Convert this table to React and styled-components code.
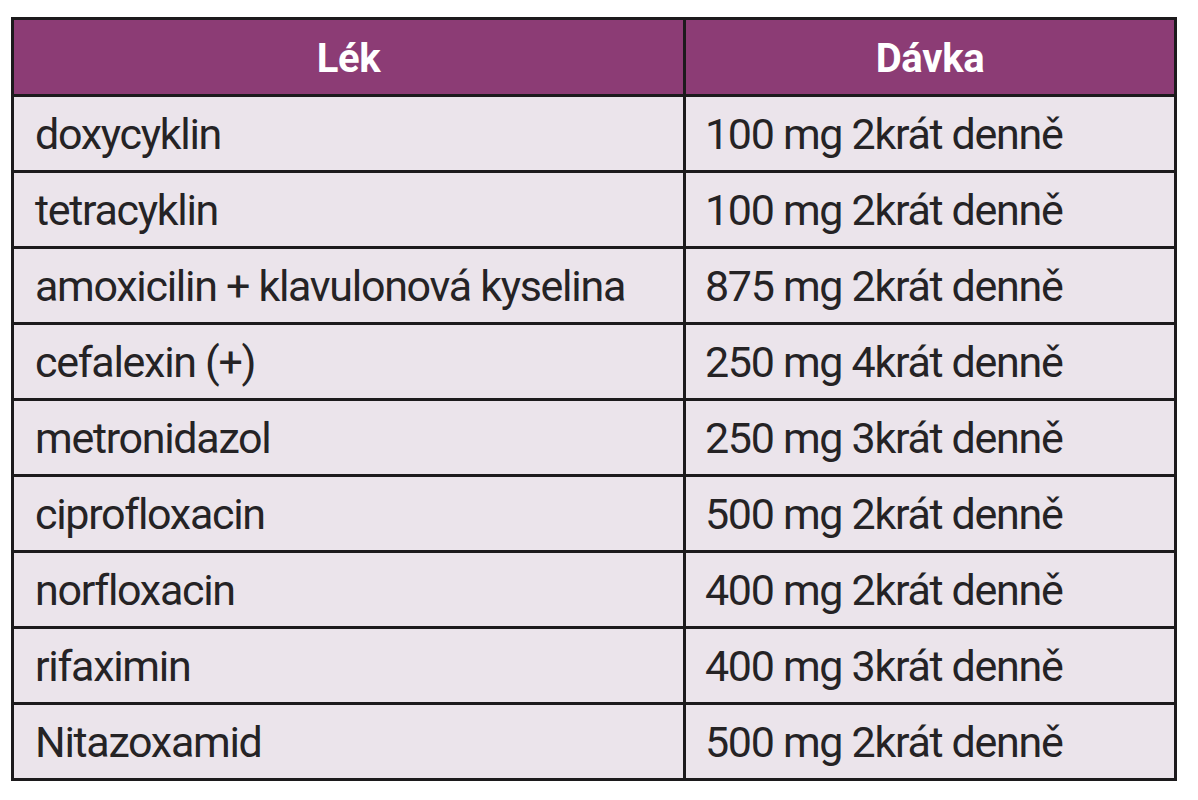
import React from "react";
import styled, { createGlobalStyle } from "styled-components";

const GlobalStyle = createGlobalStyle`
  html, body {
    margin: 0;
    padding: 0;
    background: #ffffff;
  }
  body {
    font-family: Roboto, "Liberation Sans", Arial, sans-serif;
  }
`;

const Page = styled.div`
  padding: 17px 0 0 11px;
`;

const Table = styled.div`
  display: grid;
  grid-template-columns: 669px 488px;
  grid-template-rows: 74px;
  grid-auto-rows: 73px;
  gap: 3px;
  padding: 3px;
  width: max-content;
  background: #1c1a1c;
`;

const HeaderCell = styled.div`
  display: flex;
  align-items: center;
  justify-content: center;
  background: #8c3c75;
  color: #ffffff;
  font-family: Roboto, "Liberation Sans", Arial, sans-serif;
  font-weight: 700;
  font-size: 40px;
  letter-spacing: -0.3px;
  padding-top: 2px;
`;

const Cell = styled.div`
  display: flex;
  align-items: center;
  background: #ebe4eb;
  color: #252325;
  font-family: Roboto, "Liberation Sans", Arial, sans-serif;
  font-size: 43px;
  letter-spacing: -1.3px;
  padding: 0 0 0 ${(p) => p.$indent}px;
  white-space: nowrap;
`;

const rows = [
  ["doxycyklin", "100 mg 2krát denně"],
  ["tetracyklin", "100 mg 2krát denně"],
  ["amoxicilin + klavulonová kyselina", "875 mg 2krát denně"],
  ["cefalexin (+)", "250 mg 4krát denně"],
  ["metronidazol", "250 mg 3krát denně"],
  ["ciprofloxacin", "500 mg 2krát denně"],
  ["norfloxacin", "400 mg 2krát denně"],
  ["rifaximin", "400 mg 3krát denně"],
  ["Nitazoxamid", "500 mg 2krát denně"],
];

export default function App() {
  return (
    <Page>
      <GlobalStyle />
      <Table>
        <HeaderCell>Lék</HeaderCell>
        <HeaderCell>Dávka</HeaderCell>
        {rows.map(([drug, dose]) => (
          <React.Fragment key={drug}>
            <Cell $indent={21}>{drug}</Cell>
            <Cell $indent={19}>{dose}</Cell>
          </React.Fragment>
        ))}
      </Table>
    </Page>
  );
}
